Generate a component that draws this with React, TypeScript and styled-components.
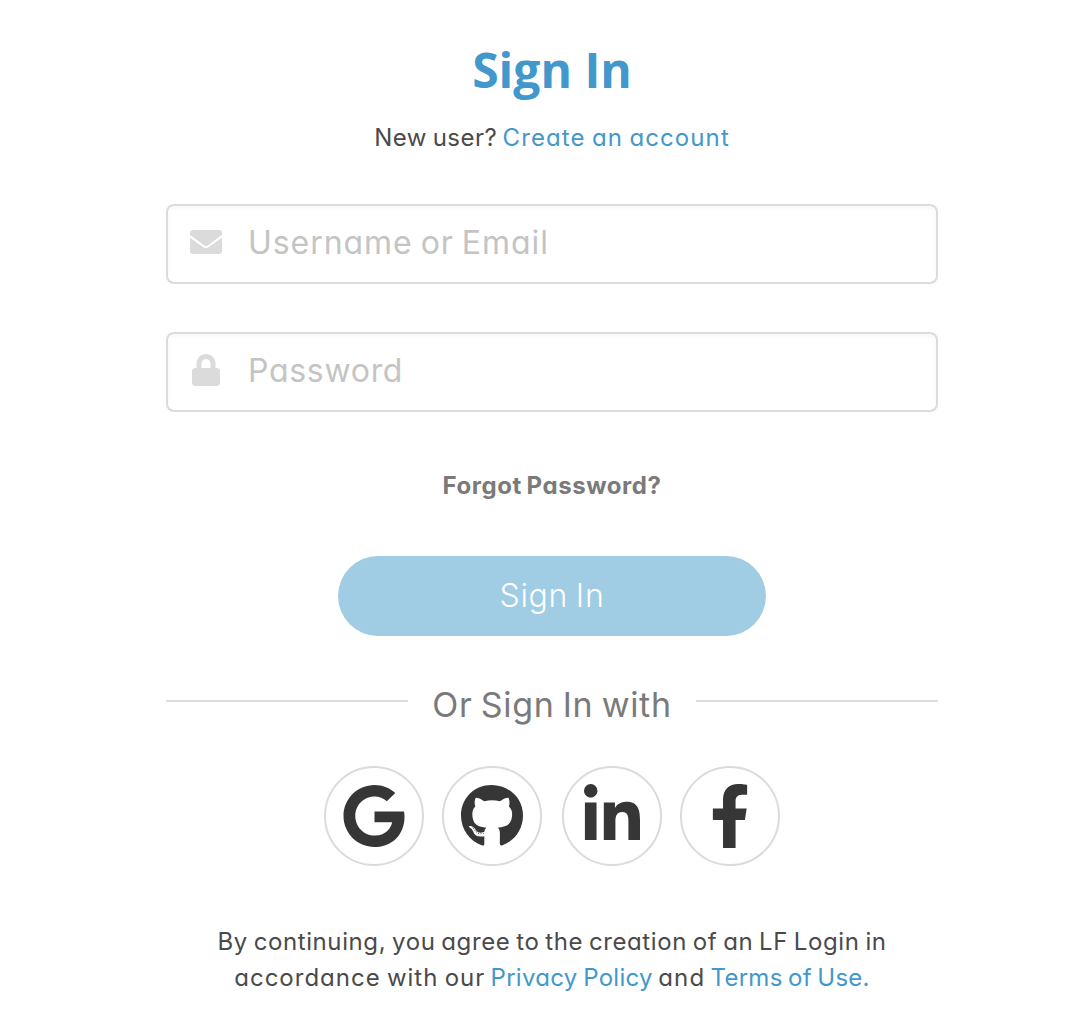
import React from "react";
import styled, { createGlobalStyle } from "styled-components";
import { FaEnvelope, FaFacebookF, FaGithub, FaGoogle, FaLinkedinIn, FaLock } from "react-icons/fa";

const GlobalStyle = createGlobalStyle`
  * { box-sizing: border-box; }
  body {
    margin: 0;
    background: #fff;
    font-family: Inter, "Liberation Sans", sans-serif;
    font-feature-settings: "cv11" 1;
    color: #4a4a4a;
  }
`;

const Page = styled.main`
  width: 772px;
  margin-left: 166px;
  padding-top: 37px;
  display: flex;
  flex-direction: column;
  align-items: center;
`;

const Title = styled.h1`
  margin: 0;
  font: 700 48px/66px "Open Sans", sans-serif;
  color: #4298cb;
`;

const Line = styled.p`
  margin: 0;
  font-size: 24px;
  line-height: 36px;
  white-space: nowrap;
  word-spacing: -1.5px;
`;

const Intro = styled(Line)`
  margin-top: 17px;
`;

const Phrase = styled.span<{ $spacing: number }>`
  letter-spacing: ${(p) => p.$spacing}px;
`;

const Link = styled.a<{ $spacing: number }>`
  color: #4298cb;
  text-decoration: none;
  letter-spacing: ${(p) => p.$spacing}px;
`;

const Field = styled.label`
  display: flex;
  align-items: center;
  width: 100%;
  height: 80px;
  margin-top: 48px;
  padding: 0 22px;
  border: 2px solid #dbdbdb;
  border-radius: 8px;
  box-shadow: inset 0 2px 4px rgba(10, 10, 10, 0.04);
`;

const FieldIcon = styled.span`
  display: flex;
  justify-content: center;
  width: 32px;
  margin: -4px 26px 0 0;
  font-size: 32px;
  color: #dbdbdb;
`;

const Input = styled.input<{ $spacing: number }>`
  flex: 1;
  min-width: 0;
  margin-top: -2px;
  padding: 0;
  border: 0;
  outline: 0;
  background: transparent;
  font: 400 32px/40px Inter, sans-serif;
  font-feature-settings: inherit;
  letter-spacing: ${(p) => p.$spacing}px;
  word-spacing: -2px;
  &::placeholder {
    color: #c4c4c4;
    opacity: 1;
  }
`;

const Forgot = styled.a`
  margin-top: 56px;
  font-size: 24px;
  font-weight: 700;
  line-height: 36px;
  letter-spacing: 0.55px;
  word-spacing: -1.5px;
  color: #7a7a7a;
`;

const Submit = styled.button`
  width: 428px;
  height: 80px;
  margin-top: 52px;
  padding: 0;
  border: 0;
  border-radius: 40px;
  background: #a0cce4;
  color: #fff;
  font: 300 32px/40px Inter, sans-serif;
  letter-spacing: 0.7px;
  word-spacing: -2px;
`;

const Divider = styled.div`
  display: flex;
  align-items: center;
  justify-content: space-between;
  width: 100%;
  height: 52px;
  margin-top: 40px;
  font-size: 34px;
  letter-spacing: 0.7px;
  word-spacing: -2px;
  color: #7a7a7a;
`;

const Rule = styled.span`
  width: 242px;
  height: 2px;
  margin-bottom: 2px;
  background: #dbdbdb;
`;

const DividerText = styled.span`
  padding-top: 5px;
  white-space: nowrap;
`;

const Providers = styled.div<{ $gap: number }>`
  display: flex;
  gap: ${(p) => p.$gap}px;
`;

const Provider = styled.button`
  display: flex;
  align-items: center;
  justify-content: center;
  width: 100px;
  height: 100px;
  padding: 0;
  border: 2px solid #dbdbdb;
  border-radius: 50%;
  background: #fff;
  color: #363636;
  font-size: 64px;
`;

const SocialArea = styled.section`
  margin-top: 38px;
`;

const Legal = styled.footer`
  margin-top: 58px;
  text-align: center;
`;

export default function App() {
  return (
    <>
      <GlobalStyle />
      <Page>
        <Title>Sign In</Title>
        <Intro>
          <Phrase $spacing={0.5}>New user?</Phrase> <Link $spacing={1.1}>Create an account</Link>
        </Intro>
        <Field>
          <FieldIcon><FaEnvelope /></FieldIcon>
          <Input $spacing={0.95} placeholder="Username or Email" />
        </Field>
        <Field>
          <FieldIcon><FaLock /></FieldIcon>
          <Input $spacing={0.7} type="password" placeholder="Password" />
        </Field>
        <Forgot>Forgot Password?</Forgot>
        <Submit>Sign In</Submit>
        <Divider>
          <Rule />
          <DividerText>Or Sign In with</DividerText>
          <Rule />
        </Divider>
        <SocialArea>
          <Providers $gap={20}>
            <Providers $gap={18}>
              <Provider aria-label="Google"><FaGoogle /></Provider>
              <Provider aria-label="GitHub"><FaGithub /></Provider>
            </Providers>
            <Providers $gap={18}>
              <Provider aria-label="LinkedIn"><FaLinkedinIn /></Provider>
              <Provider aria-label="Facebook"><FaFacebookF /></Provider>
            </Providers>
          </Providers>
        </SocialArea>
        <Legal>
          <Line>
            <Phrase $spacing={0.6}>By continuing, you agree to the creation of an LF Login in</Phrase>
          </Line>
          <Line>
            <Phrase $spacing={1}>accordance with our</Phrase>{" "}
            <Link $spacing={0.3}>Privacy Policy</Link>{" "}
            <Phrase $spacing={1.2}>and</Phrase>{" "}
            <Link $spacing={0.25}>Terms of Use.</Link>
          </Line>
        </Legal>
      </Page>
    </>
  );
}
